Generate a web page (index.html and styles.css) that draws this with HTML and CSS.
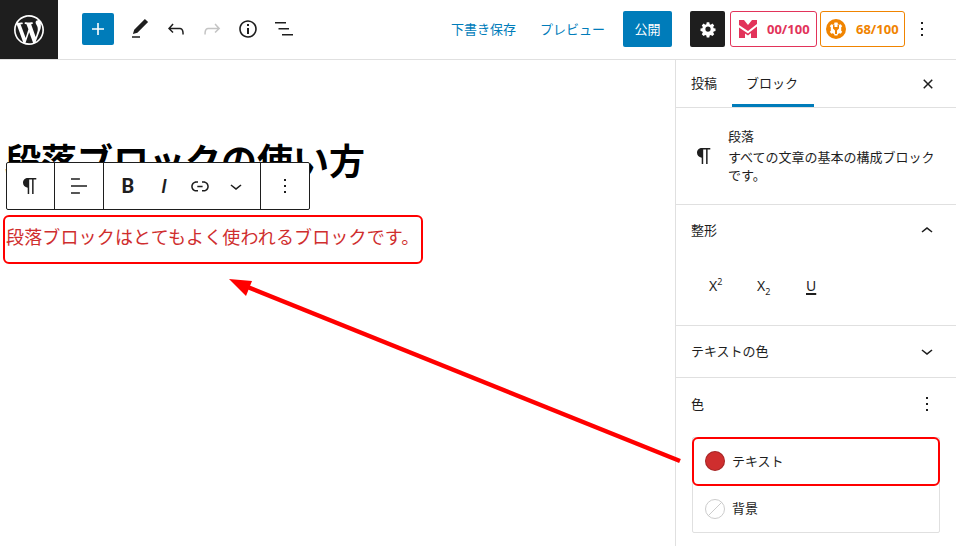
FILE: index.html
```html
<!DOCTYPE html>
<html lang="ja">
<head>
  <meta charset="UTF-8">
  <meta name="viewport" content="width=device-width, initial-scale=1.0">
  <title>段落ブロックの使い方</title>
  <link rel="stylesheet" href="styles.css">
</head>
<body>
  <div class="topbar">
    <div class="logo">
      <svg width="30" height="30" viewBox="0 0 20 20"><path fill="#fff" d="M20 10c0-5.51-4.49-10-10-10C4.48 0 0 4.49 0 10c0 5.52 4.48 10 10 10 5.51 0 10-4.48 10-10zM7.78 15.37L4.37 6.22c.55-.02 1.17-.08 1.17-.08.5-.06.44-1.13-.06-1.11 0 0-1.45.11-2.37.11-.18 0-.37 0-.58-.01C4.12 2.69 6.87 1.11 10 1.11c2.33 0 4.45.87 6.05 2.34-.68-.11-1.65.39-1.65 1.58 0 .74.45 1.36.9 2.1.35.61.55 1.36.55 2.46 0 1.49-1.4 5-1.4 5l-3.03-8.37c.54-.02.82-.17.82-.17.5-.05.44-1.25-.06-1.22 0 0-1.44.12-2.38.12-.87 0-2.33-.12-2.33-.12-.5-.03-.56 1.2-.06 1.22l.92.08 1.26 3.41zM17.41 10c.24-.64.74-1.87.43-4.25.7 1.29 1.05 2.71 1.05 4.25 0 3.29-1.73 6.24-4.4 7.78.97-2.59 1.94-5.2 2.92-7.78zM6.1 18.09C3.12 16.65 1.11 13.53 1.11 10c0-1.3.23-2.48.72-3.59C3.25 10.3 4.67 14.2 6.1 18.09zm4.03-6.63l2.58 6.98c-.86.29-1.76.45-2.71.45-.79 0-1.57-.11-2.29-.33.81-2.38 1.62-4.74 2.42-7.1z"/></svg>
    </div>
    <div class="tools">
      <div class="add-btn">
        <svg width="24" height="24" viewBox="0 0 24 24"><path fill="#fff" d="M18 11.2h-5.2V6h-1.6v5.2H6v1.6h5.2V18h1.6v-5.2H18z"/></svg>
      </div>
      <div class="tool"><svg width="24" height="24" viewBox="0 0 24 24"><path d="M20.1 5.1L16.9 2 6.2 12.7l-1.3 4.4 4.5-1.3L20.1 5.1zM4 20.8h8v-1.5H4v1.5z"/></svg></div>
      <div class="tool"><svg width="24" height="24" viewBox="0 0 24 24"><path d="M18.3 11.7c-.6-.6-1.4-.9-2.3-.9H6.7l2.9-3.3-1.1-1-4.5 5L8.5 16l1-1-2.7-2.7H16c.5 0 .9.2 1.3.5 1 1 1 3.4 1 4.5v.3h1.5v-.2c0-1.5 0-4.3-1.5-5.7z"/></svg></div>
      <div class="tool disabled"><svg width="24" height="24" viewBox="0 0 24 24"><path d="M15.6 6.5l-1.1 1 2.9 3.3H8c-.9 0-1.7.3-2.3.9-1.4 1.5-1.4 4.2-1.4 5.6v.2h1.5v-.3c0-1.1 0-3.5 1-4.5.3-.3.7-.5 1.3-.5h9.2L14.5 15l1.1 1.1 4.6-4.6-4.6-5z"/></svg></div>
      <div class="tool"><svg width="24" height="24" viewBox="0 0 24 24"><path d="M12 3.2c-4.8 0-8.8 3.9-8.8 8.8 0 4.8 3.9 8.8 8.8 8.8 4.8 0 8.8-3.9 8.8-8.8 0-4.8-4-8.8-8.8-8.8zm0 16c-4 0-7.2-3.3-7.2-7.2C4.8 8 8 4.8 12 4.8s7.2 3.3 7.2 7.2c0 4-3.2 7.2-7.2 7.2zM11 17h2v-6h-2v6zm0-8h2V7h-2v2z"/></svg></div>
      <div class="tool"><svg width="24" height="24" viewBox="0 0 24 24"><path d="M3 5h11v1.500H3zM6.500 11h10.500v1.500H6.500zM10 17h11v1.500H10z"/></svg></div>
    </div>
    <div class="actions">
      <a class="link-btn draft">下書き保存</a>
      <a class="link-btn preview">プレビュー</a>
      <div class="publish">公開</div>
      <div class="settings">
        <svg width="18" height="18" viewBox="0 0 24 24"><path fill="#fff" d="M10.3 3h3.4l.5 2.5 1.5.7 2.2-1.4 2.4 2.4-1.4 2.2.7 1.5 2.4.5v3.4l-2.4.5-.7 1.5 1.4 2.2-2.4 2.4-2.2-1.4-1.5.7-.5 2.5h-3.4l-.5-2.5-1.5-.7-2.2 1.4-2.4-2.4 1.4-2.2-.7-1.5-2.4-.5v-3.4l2.4-.5.7-1.500-1.4-2.200 2.4-2.400 2.200 1.400 1.500-.700zM12 8.500a3.500 3.500 0 1 0 0 7 3.500 3.500 0 0 0 0-7z"/></svg>
      </div>
      <div class="badge badge-red">
        <svg width="18" height="18" viewBox="0 0 18 18"><path fill="#e2335a" d="M0 0h5l4 5 4-5h5v4l-9 7-9-6zM0 7.500l9 6 9-7V18h-6v-5l-3 2.500-3-2V18H0z"/></svg>
        <span>00/100</span>
      </div>
      <div class="badge badge-orange">
        <svg width="20" height="20" viewBox="0 0 20 20"><circle cx="10" cy="10" r="10" fill="#f08400"/><path fill="#fff" d="M8.500 3.500h3l.4 1.500 1.500.8 1.300-.6 1.500 2-1 1.100v3.400l1 1.100-1.500 2-1.300-.6-1.500.8-.4 1.500h-3l-.4-1.500-1.500-.8-1.300.6-1.500-2 1-1.100V8.300l-1-1.100 1.500-2 1.300.6 1.500-.8z"/><path fill="#f08400" d="M7 5.500h1.500V8h3V5.500H13V9.500l-2 2V15H9v-3.500l-2-2z"/></svg>
        <span>68/100</span>
      </div>
      <div class="more-btn">
        <svg width="24" height="24" viewBox="0 0 24 24"><path d="M13 19h-2v-2h2v2zm0-6h-2v-2h2v2zm0-6h-2V5h2v2z"/></svg>
      </div>
    </div>
  </div>

  <div class="main">
    <div class="canvas">
      <div class="block-toolbar">
        <div class="tb-group tb-first">
          <svg width="24" height="24" viewBox="0 0 24 24"><path d="M18.300 4H9.900c-2.700 0-4.900 2-4.900 4.800 0 2.500 1.800 4.500 4.700 4.900V20h1.500V5.500h2.900V20h1.500V5.500h2.700z"/></svg>
        </div>
        <div class="tb-group tb-second">
          <svg width="24" height="24" viewBox="0 0 24 24"><path d="M4 19.800h8.900v-1.500H4zM12.900 4.200H4v1.500h8.900zM4 11.200v1.500h16v-1.500z"/></svg>
        </div>
        <div class="tb-group tb-third">
          <span class="tb-btn tb-bold">B</span>
          <span class="tb-btn tb-italic">I</span>
          <span class="tb-btn"><svg width="24" height="24" viewBox="0 0 24 24"><path d="M15.600 7.200H14v1.500h1.600c2 0 3.700 1.700 3.700 3.700s-1.700 3.700-3.700 3.700H14v1.500h1.600c2.800 0 5.200-2.300 5.200-5.200 0-2.900-2.300-5.200-5.200-5.200zM4.700 12.400c0-2 1.700-3.700 3.700-3.700H10V7.200H8.400c-2.900 0-5.200 2.300-5.200 5.200 0 2.900 2.300 5.200 5.200 5.200H10v-1.500H8.400c-2 0-3.700-1.700-3.700-3.700zm4.600.9h5.300v-1.500H9.300v1.500z"/></svg></span>
          <span class="tb-btn"><svg width="24" height="24" viewBox="0 0 24 24"><path d="M17.500 11.600L12 16l-5.500-4.400.9-1.200L12 14l4.500-3.600 1 1.200z"/></svg></span>
        </div>
        <div class="tb-group tb-last">
          <svg width="24" height="24" viewBox="0 0 24 24"><path d="M13 19h-2v-2h2v2zm0-6h-2v-2h2v2zm0-6h-2V5h2v2z"/></svg>
        </div>
      </div>
      <h1 class="post-title">段落ブロックの使い方</h1>
      <p class="post-text">段落ブロックはとてもよく使われるブロックです。</p>
    </div>

    <div class="sidebar">
      <div class="tabs">
        <span class="tab">投稿</span>
        <span class="tab active">ブロック</span>
        <svg class="tabs-close" width="24" height="24" viewBox="0 0 24 24"><path d="M12 13.060l3.712 3.713 1.061-1.060L13.061 12l3.712-3.712-1.060-1.060L12 10.938 8.288 7.227l-1.061 1.060L10.939 12l-3.712 3.712 1.060 1.061L12 13.061z"/></svg>
      </div>
      <div class="block-card">
        <svg class="card-icon" width="24" height="24" viewBox="0 0 24 24"><path d="M18.300 4H9.900c-2.700 0-4.900 2-4.900 4.800 0 2.500 1.800 4.500 4.700 4.900V20h1.500V5.500h2.900V20h1.500V5.500h2.700z"/></svg>
        <div class="card-body">
          <div class="card-title">段落</div>
          <div class="card-desc">すべての文章の基本の構成ブロックです。</div>
        </div>
      </div>
      <div class="panel panel-format">
        <div class="panel-head">
          <span>整形</span>
          <svg width="24" height="24" viewBox="0 0 24 24"><path d="M6.500 13.400L12 9l5.500 4.400-.9 1.200L12 11l-4.500 3.600-1-1.200z"/></svg>
        </div>
        <div class="format-btns">
          <span class="format-btn">X<sup>2</sup></span>
          <span class="format-btn format-sub">X<sub>2</sub></span>
          <span class="format-u">U</span>
        </div>
      </div>
      <div class="panel panel-textcolor">
        <div class="panel-head">
          <span>テキストの色</span>
          <svg width="24" height="24" viewBox="0 0 24 24"><path d="M17.500 11.600L12 16l-5.500-4.400.9-1.200L12 14l4.500-3.600 1 1.200z"/></svg>
        </div>
      </div>
      <div class="panel panel-color">
        <div class="panel-head">
          <span>色</span>
          <svg width="24" height="24" viewBox="0 0 24 24"><path d="M13 19h-2v-2h2v2zm0-6h-2v-2h2v2zm0-6h-2V5h2v2z"/></svg>
        </div>
        <div class="color-list">
          <div class="color-row color-row-first">
            <span class="swatch swatch-red"></span>
            <span class="color-name">テキスト</span>
          </div>
          <div class="color-row">
            <span class="swatch swatch-none"></span>
            <span class="color-name">背景</span>
          </div>
        </div>
      </div>
    </div>
  </div>

  <!-- annotations drawn over the screen -->
  <div class="mark mark-text"></div>
  <div class="mark mark-color"></div>
  <svg class="arrow" width="956" height="546" viewBox="0 0 956 546">
    <line x1="680" y1="461" x2="245" y2="286" stroke="#f00" stroke-width="4.500"/>
    <polygon fill="#f00" points="229,279 252,281 246,296"/>
  </svg>
</body>
</html>
```

FILE: styles.css
```css
* {
  box-sizing: border-box;
}

body {
  margin: 0;
  width: 956px;
  height: 546px;
  overflow: hidden;
  position: relative;
  background-color: #fff;
  color: #1e1e1e;
  font-family: "Noto Sans CJK JP", "Noto Sans", sans-serif;
  font-size: 13px;
}

svg {
  display: block;
  fill: #1e1e1e;
}

/* top bar */
.topbar {
  display: flex;
  align-items: center;
  height: 60px;
  padding-bottom: 1px;
  border-bottom: 1px solid #e0e0e0;
}

.logo {
  display: flex;
  align-items: center;
  justify-content: center;
  align-self: flex-start;
  width: 58px;
  height: 59px;
  padding-top: 1px;
  background-color: #1e1e1e;
}

.tools {
  display: flex;
  align-items: center;
  margin-left: 24px;
}

.add-btn {
  display: flex;
  align-items: center;
  justify-content: center;
  width: 32px;
  height: 32px;
  margin-right: 8px;
  border-radius: 2px;
  background-color: #007cba;
}

.tool {
  display: flex;
  align-items: center;
  justify-content: center;
  width: 36px;
  height: 36px;
}

.tool.disabled svg {
  fill: #c4c4c4;
}

.actions {
  display: flex;
  align-items: center;
  margin-left: auto;
  padding-right: 22px;
}

.link-btn {
  padding-bottom: 2px;
  color: #007cba;
  font-size: 13px;
  white-space: nowrap;
}

.draft {
  margin-right: 24px;
}

.preview {
  margin-right: 18px;
}

.publish {
  display: flex;
  align-items: center;
  justify-content: center;
  width: 49px;
  height: 36px;
  margin-right: 18px;
  padding-bottom: 2px;
  border-radius: 2px;
  background-color: #007cba;
  color: #fff;
}

.settings {
  display: flex;
  align-items: center;
  justify-content: center;
  width: 35px;
  height: 36px;
  margin-right: 5px;
  border-radius: 2px;
  background-color: #1e1e1e;
}

.badge {
  display: flex;
  align-items: center;
  height: 36px;
  border: 1px solid;
  border-radius: 3px;
  font-family: "Noto Sans", sans-serif;
  font-size: 13px;
  font-weight: 700;
}

.badge-red {
  gap: 10px;
  width: 87px;
  margin-right: 3px;
  padding-left: 8px;
  color: #e2335a;
  border-color: #e2335a;
}

.badge-orange {
  gap: 10px;
  width: 85px;
  margin-right: 5px;
  padding-left: 5px;
  color: #f08400;
  border-color: #f08400;
}

.more-btn {
  width: 24px;
}

/* editor area */
.main {
  display: flex;
  height: 486px;
}

.canvas {
  position: relative;
  flex: 1;
  padding: 74px 0 0 6px;
}

.post-title {
  margin: 0 0 0 -1px;
  font-size: 36px;
  font-weight: 700;
  line-height: 50px;
  color: #000;
}

.post-text {
  margin: 39px 0 0;
  font-size: 18px;
  line-height: 27px;
  letter-spacing: 0.15px;
  color: #cf2e2e;
  white-space: nowrap;
}

/* floating block toolbar */
.block-toolbar {
  position: absolute;
  left: 6px;
  top: 102px;
  display: flex;
  width: 304px;
  height: 48px;
  border: 1px solid #1e1e1e;
  border-radius: 2px;
  background-color: #fff;
}

.tb-group {
  display: flex;
  align-items: center;
  justify-content: center;
  border-right: 1px solid #1e1e1e;
}

.tb-first {
  width: 48px;
  padding-right: 1px;
}

.tb-second {
  width: 49px;
}

.tb-third {
  width: 157px;
}

.tb-last {
  flex: 1;
  border-right: 0;
}

.tb-btn {
  display: flex;
  align-items: center;
  justify-content: center;
  width: 36px;
  font-family: Roboto, sans-serif;
  font-size: 20px;
  line-height: 24px;
}

.tb-bold {
  font-weight: 700;
}

.tb-italic {
  font-style: italic;
  font-weight: 500;
}

/* right sidebar */
.sidebar {
  width: 281px;
  border-left: 1px solid #e0e0e0;
}

.tabs {
  display: flex;
  align-items: center;
  height: 48px;
  padding-left: 15px;
  border-bottom: 1px solid #e0e0e0;
}

.tab {
  height: 47px;
  line-height: 45px;
  white-space: nowrap;
}

.tab.active {
  width: 82px;
  margin-left: 15px;
  padding-right: 2px;
  text-align: center;
  border-bottom: 3px solid #007cba;
}

.tabs-close {
  margin-left: auto;
  margin-right: 16px;
}

.block-card {
  display: flex;
  align-items: center;
  gap: 12px;
  height: 97px;
  padding: 0 16px;
  border-bottom: 1px solid #e0e0e0;
}

.card-icon {
  flex: none;
  width: 24px;
}

.card-body {
  padding-bottom: 2px;
}

.card-title,
.card-desc {
  font-size: 13px;
  line-height: 18px;
}

.card-title {
  margin-bottom: 3px;
}

.panel {
  border-bottom: 1px solid #e0e0e0;
  padding: 0 16px;
}

.panel-head {
  display: flex;
  align-items: center;
  justify-content: space-between;
  height: 50px;
  padding-right: 1px;
}

.panel-head span {
  padding-bottom: 2px;
  margin-left: -1px;
}

.panel-format {
  height: 121px;
}

.panel-textcolor {
  height: 52px;
}

.panel-color {
  border-bottom: 0;
  padding-top: 1px;
}

.format-btns {
  display: flex;
  margin-top: 19px;
  padding-left: 17px;
  font-family: "Noto Sans", sans-serif;
  font-size: 14px;
  line-height: 24px;
}

.format-btn {
  width: 48px;
}

.format-sub {
  width: 49px;
}

.format-btn sup,
.format-btn sub {
  font-size: 9px;
  line-height: 0;
}

.format-u {
  text-decoration: underline;
  text-decoration-thickness: 1.500px;
  text-underline-offset: 2px;
}

.color-list {
  margin-top: 8px;
  width: 248px;
  border: 1px solid #e0e0e0;
  border-radius: 2px;
}

.color-row {
  display: flex;
  align-items: center;
  gap: 8px;
  height: 47px;
  padding-left: 12px;
}

.color-row-first {
  padding-bottom: 1px;
}

.color-name {
  margin-left: -1px;
  padding-bottom: 2px;
}

.swatch {
  width: 20px;
  height: 20px;
  border-radius: 50%;
}

.swatch-red {
  background-color: #cf2e2e;
  box-shadow: inset 0 0 0 1px rgba(0, 0, 0, 0.2);
}

.swatch-none {
  border: 1px solid #ccc;
  background: linear-gradient(-45deg, transparent 48%, #ccc 48%, #ccc 52%, transparent 52%);
}

/* red annotations */
.mark {
  position: absolute;
  border: 2px solid #f00;
  border-radius: 6px;
}

.mark-text {
  left: 3px;
  top: 215px;
  width: 420px;
  height: 49px;
}

.mark-color {
  left: 692px;
  top: 437px;
  width: 248px;
  height: 49px;
}

.arrow {
  position: absolute;
  left: 0;
  top: 0;
  fill: #f00;
  pointer-events: none;
}
```
